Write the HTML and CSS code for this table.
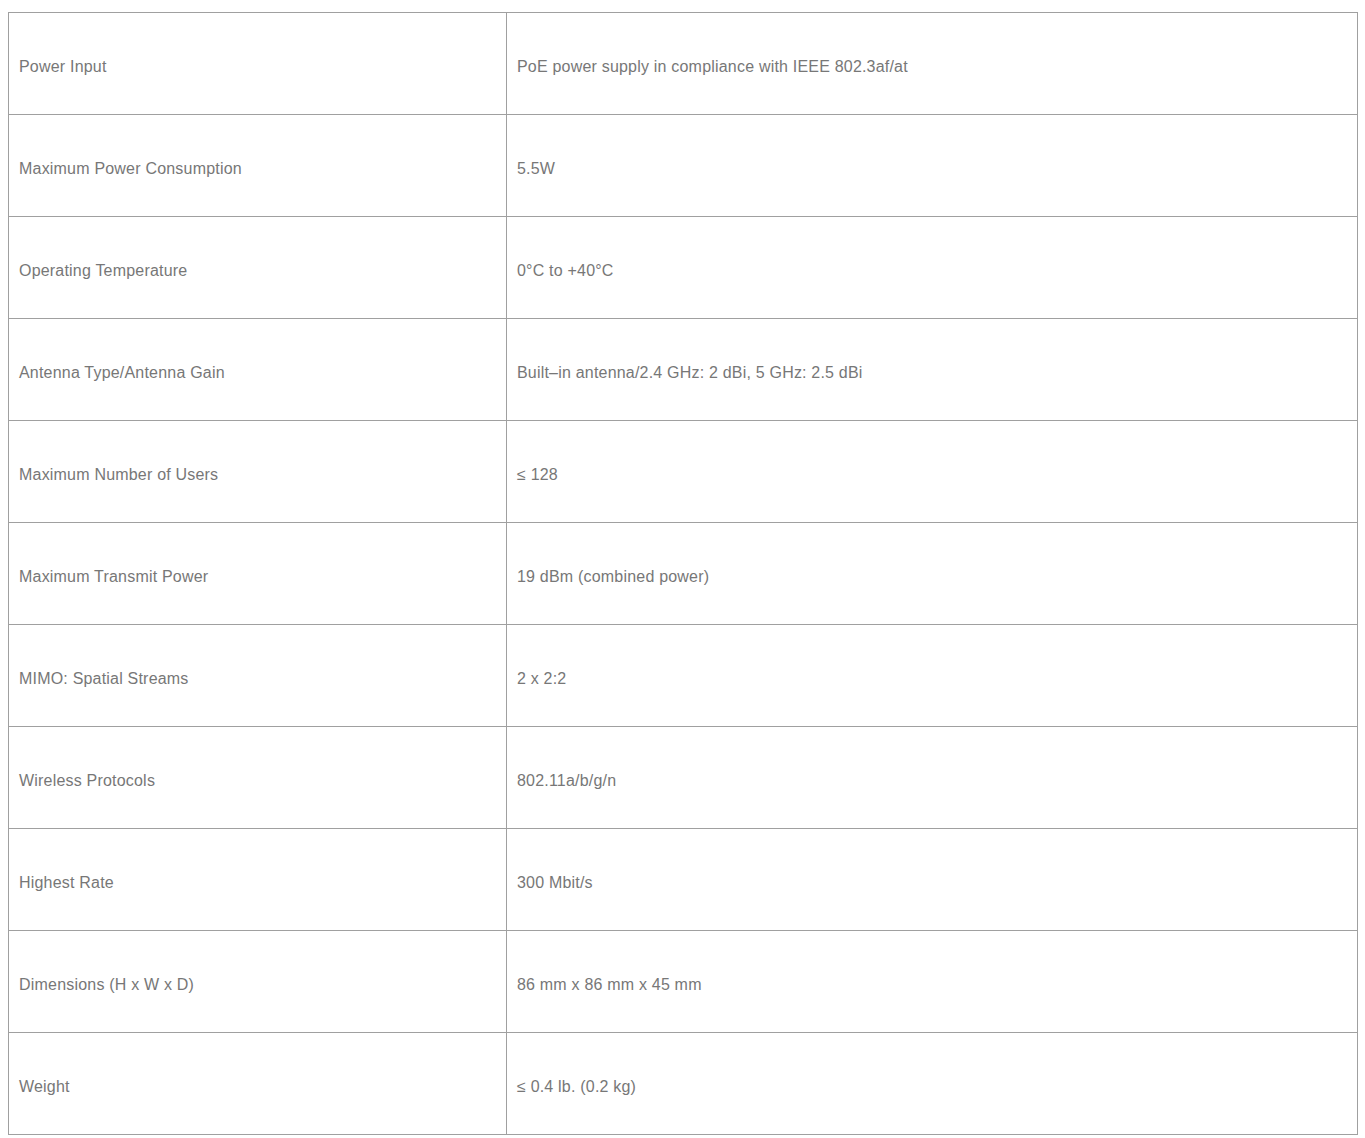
FILE: index.html
```html
<!DOCTYPE html>
<html>
<head>
<meta charset="utf-8">
<link rel="stylesheet" href="styles.css">
</head>
<body>
<table class="spec">
<tbody>
<tr><td class="k">Power Input</td><td class="v">PoE power supply in compliance with IEEE 802.3af/at</td></tr>
<tr><td class="k">Maximum Power Consumption</td><td class="v">5.5W</td></tr>
<tr><td class="k">Operating Temperature</td><td class="v">0°C to +40°C</td></tr>
<tr><td class="k">Antenna Type/Antenna Gain</td><td class="v">Built–in antenna/2.4 GHz: 2 dBi, 5 GHz: 2.5 dBi</td></tr>
<tr><td class="k">Maximum Number of Users</td><td class="v">≤ 128</td></tr>
<tr><td class="k">Maximum Transmit Power</td><td class="v">19 dBm (combined power)</td></tr>
<tr><td class="k">MIMO: Spatial Streams</td><td class="v">2 x 2:2</td></tr>
<tr><td class="k">Wireless Protocols</td><td class="v">802.11a/b/g/n</td></tr>
<tr><td class="k">Highest Rate</td><td class="v">300 Mbit/s</td></tr>
<tr><td class="k">Dimensions (H x W x D)</td><td class="v">86 mm x 86 mm x 45 mm</td></tr>
<tr><td class="k">Weight</td><td class="v">≤ 0.4 lb. (0.2 kg)</td></tr>
</tbody>
</table>
</body>
</html>
```
FILE: styles.css
```css
html, body {
  background: #fff;
}
body {
  margin: 12px 7px 8px 8px;
  font-family: "Liberation Sans", Arial, sans-serif;
  color: #777;
}
.spec {
  border-collapse: collapse;
  width: 1350px;
  table-layout: fixed;
}
.spec td {
  box-sizing: border-box;
  border: 1px solid #a0a0a0;
  height: 102px;
  padding: 6px 10px 0;
  font-size: 16px;
  letter-spacing: 0.2px;
  vertical-align: middle;
}
.spec td.k {
  width: 498px;
}
```
